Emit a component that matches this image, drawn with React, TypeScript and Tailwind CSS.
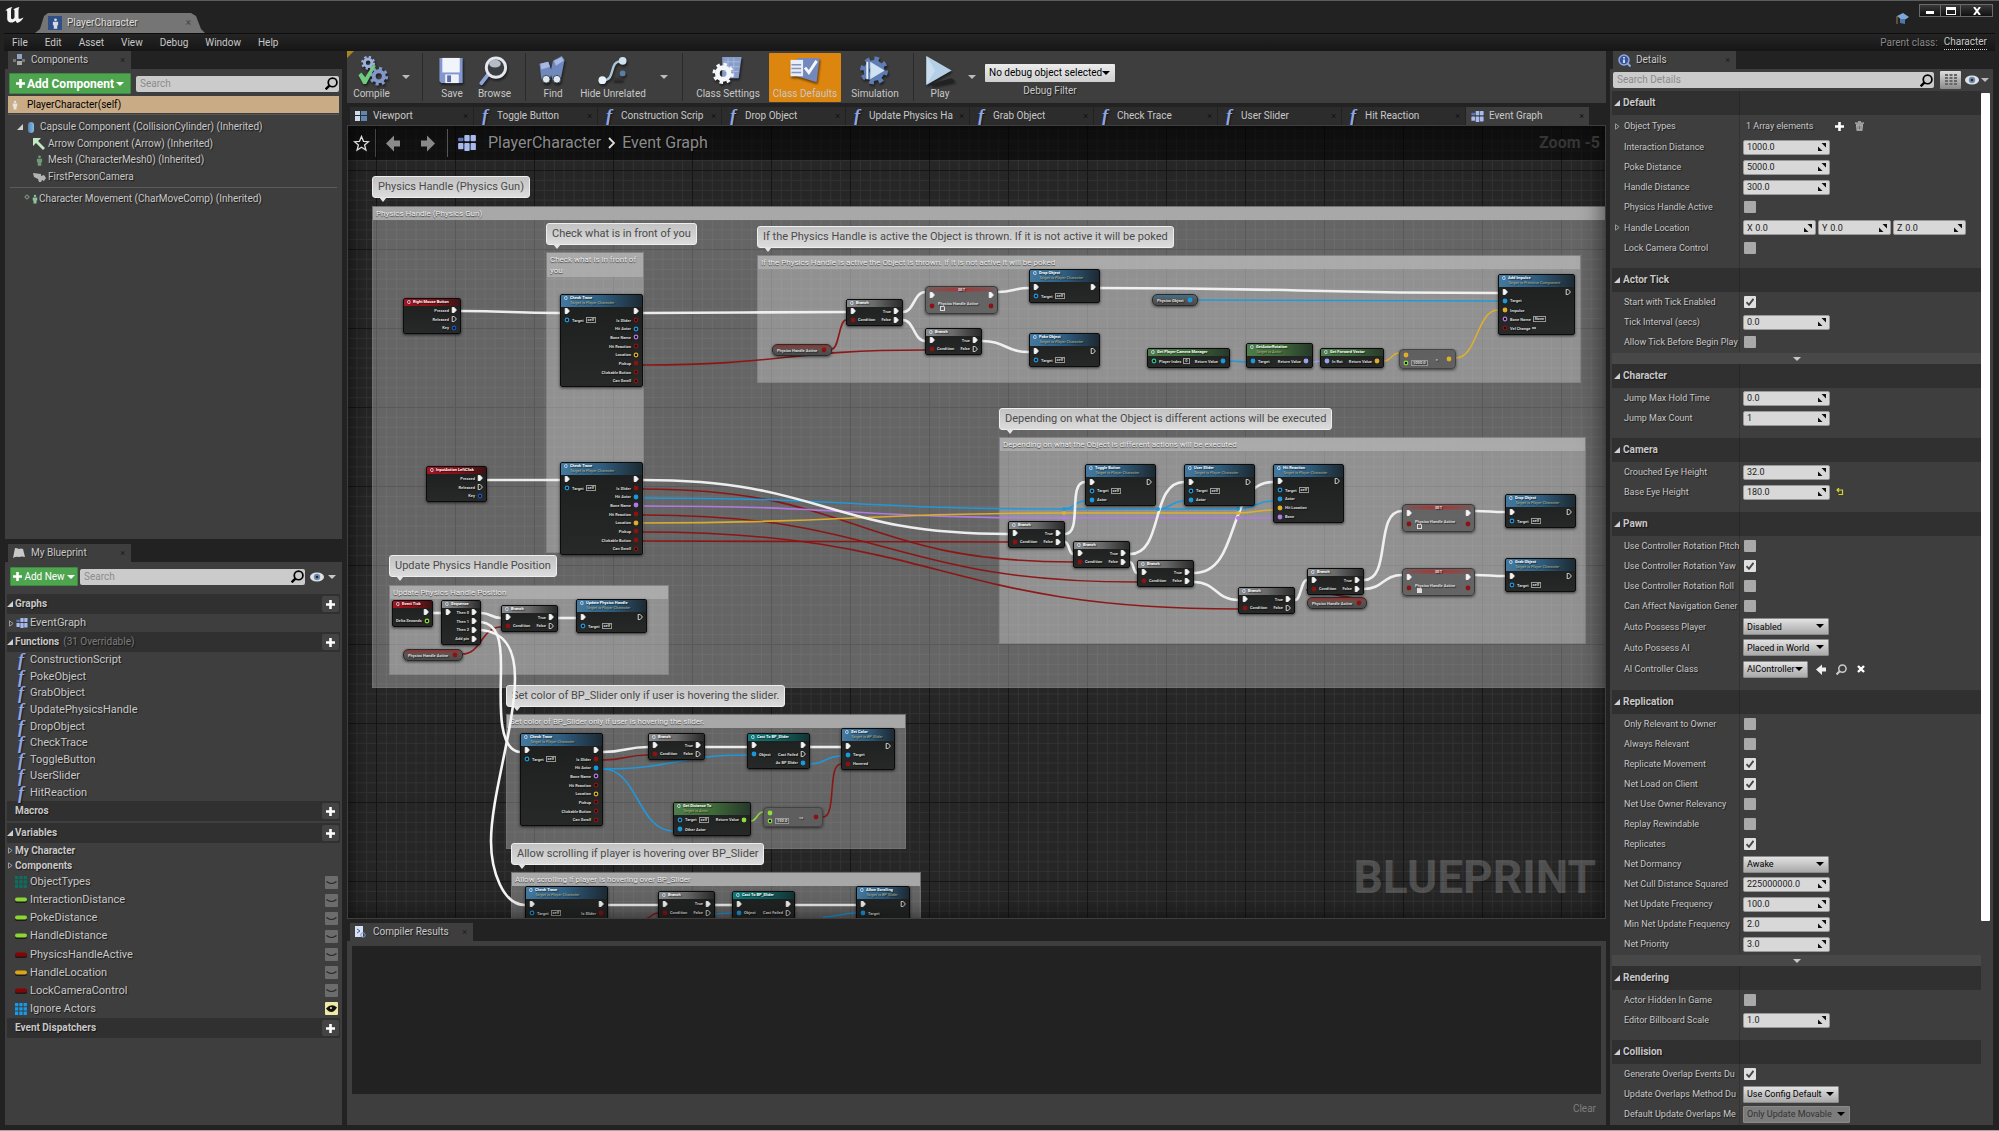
import type { ReactNode } from "react";
import clsx from "clsx";

type Tone =
  | "exec"
  | "blue"
  | "navy"
  | "red"
  | "purple"
  | "yellow"
  | "green"
  | "teal"
  | "lavender";

const toneColor: Record<Tone, string> = {
  exec: "#f4f4f4",
  blue: "#1c9ae0",
  navy: "#1657c4",
  red: "#8d1212",
  purple: "#b47be8",
  yellow: "#e3b02a",
  green: "#8ee03a",
  teal: "#2bc78c",
  lavender: "#9aa6f0",
};

type PinData = { tone: Tone; text?: string; linked?: boolean; box?: string };

type Row = [PinData | null, PinData | null];

type Skin = "func" | "event" | "flow" | "pure" | "cast";

type NodeData = {
  x: number;
  y: number;
  w: number;
  h: number;
  skin: Skin;
  title: string;
  sub?: string;
  rows: Row[];
};

const pin = (
  tone: Tone,
  text?: string,
  linked = false,
  box?: string,
): PinData => ({ tone, text, linked, box });

const execOn = pin("exec", undefined, true);
const execOff = pin("exec");
const selfPin = pin("blue", "Target", false, "self");

/* ---------- node builders ---------- */

const PLAYER = "Target is Player Character";

function checkTrace(x: number, y: number, linked: string[]): NodeData {
  const outs: [Tone, string][] = [
    ["red", "Is Slider"],
    ["blue", "Hit Actor"],
    ["purple", "Bone Name"],
    ["red", "Hit Reaction"],
    ["yellow", "Location"],
    ["red", "Pickup"],
    ["red", "Clickable Button"],
    ["red", "Can Scroll"],
  ];
  return {
    x,
    y,
    w: 83,
    h: 93,
    skin: "func",
    title: "Check Trace",
    sub: PLAYER,
    rows: [
      [execOn, execOn],
      ...outs.map(
        ([tone, text], i): Row => [
          i === 0 ? selfPin : null,
          pin(tone, text, linked.includes(text)),
        ],
      ),
    ],
  };
}

function branch(x: number, y: number, falseLinked = true): NodeData {
  return {
    x,
    y,
    w: 57,
    h: 27,
    skin: "flow",
    title: "Branch",
    rows: [
      [execOn, pin("exec", "True", true)],
      [pin("red", "Condition", true), pin("exec", "False", falseLinked)],
    ],
  };
}

function call(
  x: number,
  y: number,
  title: string,
  outLinked = false,
  extra: Row[] = [],
): NodeData {
  return {
    x,
    y,
    w: 71,
    h: extra.length === 0 ? 34 : extra.length === 1 ? 42 : 59,
    skin: "func",
    title,
    sub: PLAYER,
    rows: [[execOn, outLinked ? execOn : execOff], [selfPin, null], ...extra],
  };
}

function input(x: number, y: number, w: number, title: string): NodeData {
  return {
    x,
    y,
    w,
    h: 36,
    skin: "event",
    title,
    rows: [
      [null, pin("exec", "Pressed", true)],
      [null, pin("exec", "Released")],
      [null, pin("navy", "Key")],
    ],
  };
}

function castTo(x: number, y: number): NodeData {
  return {
    x,
    y,
    w: 63,
    h: 36,
    skin: "cast",
    title: "Cast To BP_Slider",
    rows: [
      [execOn, execOn],
      [pin("blue", "Object", true), pin("exec", "Cast Failed")],
      [null, pin("blue", "As BP Slider", true)],
    ],
  };
}

// nodes on the lower edge of the view only show their first rows
const firstRows = (node: NodeData, count: number, h: number): NodeData => ({
  ...node,
  h,
  rows: node.rows.slice(0, count),
});

const nodes: NodeData[] = [
  input(55, 172, 58, "Right Mouse Button"),
  input(78, 340, 61, "InputAction LeftClick"),
  checkTrace(212, 168, ["Pickup"]),
  checkTrace(212, 336, [
    "Is Slider",
    "Hit Actor",
    "Bone Name",
    "Hit Reaction",
    "Location",
    "Pickup",
    "Clickable Button",
  ]),
  branch(498, 173),
  branch(577, 202, false),
  call(681, 143, "Drop Object", true),
  call(681, 207, "Poke Object"),
  {
    x: 799,
    y: 222,
    w: 83,
    h: 20,
    skin: "pure",
    title: "Get Player Camera Manager",
    rows: [
      [
        pin("teal", "Player Index", false, "0"),
        pin("blue", "Return Value", true),
      ],
    ],
  },
  {
    x: 898,
    y: 217,
    w: 67,
    h: 25,
    skin: "pure",
    title: "GetActorRotation",
    sub: "Target is Actor",
    rows: [[pin("blue", "Target", true), pin("lavender", "Return Value", true)]],
  },
  {
    x: 972,
    y: 222,
    w: 64,
    h: 20,
    skin: "pure",
    title: "Get Forward Vector",
    rows: [
      [pin("lavender", "In Rot", true), pin("yellow", "Return Value", true)],
    ],
  },
  {
    x: 1150,
    y: 148,
    w: 77,
    h: 61,
    skin: "func",
    title: "Add Impulse",
    sub: "Target is Primitive Component",
    rows: [
      [execOn, execOff],
      [pin("blue", "Target", true), null],
      [pin("yellow", "Impulse", true), null],
      [pin("purple", "Bone Name", false, "None"), null],
      [pin("red", "Vel Change", false, " "), null],
    ],
  },
  call(737, 338, "Toggle Button", false, [[pin("blue", "Actor", true), null]]),
  call(836, 338, "User Slider", false, [[pin("blue", "Actor", true), null]]),
  call(925, 338, "Hit Reaction", false, [
    [pin("blue", "Actor", true), null],
    [pin("yellow", "Hit Location", true), null],
    [pin("purple", "Bone", true), null],
  ]),
  branch(660, 395),
  branch(725, 415),
  branch(789, 434),
  branch(890, 461, false),
  branch(959, 442),
  call(1157, 368, "Drop Object"),
  call(1157, 432, "Grab Object"),
  {
    x: 44,
    y: 474,
    w: 41,
    h: 27,
    skin: "event",
    title: "Event Tick",
    rows: [
      [null, execOn],
      [null, pin("green", "Delta Seconds")],
    ],
  },
  {
    x: 93,
    y: 474,
    w: 40,
    h: 45,
    skin: "flow",
    title: "Sequence",
    rows: [
      [execOn, pin("exec", "Then 0", true)],
      [null, pin("exec", "Then 1", true)],
      [null, pin("exec", "Then 2", true)],
      [null, pin("exec", "Add pin", true)],
    ],
  },
  branch(153, 479, false),
  call(228, 473, "Update Physics Handle"),
  checkTrace(172, 607, ["Is Slider", "Hit Actor"]),
  branch(300, 607, false),
  castTo(399, 607),
  {
    x: 493,
    y: 602,
    w: 54,
    h: 42,
    skin: "func",
    title: "Set Color",
    sub: "Target is BP Slider",
    rows: [
      [execOn, execOff],
      [pin("blue", "Target", true), null],
      [pin("red", "Hovered", true), null],
    ],
  },
  {
    x: 325,
    y: 676,
    w: 78,
    h: 34,
    skin: "pure",
    title: "Get Distance To",
    sub: "Target is Actor",
    rows: [
      [
        pin("blue", "Target", false, "self"),
        pin("green", "Return Value", true),
      ],
      [pin("blue", "Other Actor", true), null],
    ],
  },
  firstRows(checkTrace(177, 760, ["Is Slider"]), 2, 34),
  firstRows(branch(310, 765, false), 2, 28),
  firstRows(castTo(384, 765), 2, 28),
  {
    x: 508,
    y: 760,
    w: 54,
    h: 34,
    skin: "func",
    title: "Allow Scrolling",
    sub: "Target is BP Slider",
    rows: [
      [execOn, execOff],
      [pin("blue", "Target", true), null],
    ],
  },
];

const pills = [
  { x: 424, y: 218, w: 60, text: "Physics Handle Active", tone: "red" as Tone },
  { x: 804, y: 168, w: 46, text: "Physics Object", tone: "blue" as Tone },
  { x: 959, y: 471, w: 60, text: "Physics Handle Active", tone: "red" as Tone },
  { x: 55, y: 523, w: 60, text: "Physics Handle Active", tone: "red" as Tone },
];

const setNodes = [
  { x: 577, y: 160, on: false },
  { x: 1054, y: 378, on: false },
  { x: 1054, y: 442, on: true },
];

const mathNodes = [
  { x: 1051, y: 223, w: 57, value: "1000.0", op: "×", from: "yellow" as Tone, to: "yellow" as Tone },
  { x: 415, y: 681, w: 60, value: "150.0", op: "<=", from: "green" as Tone, to: "red" as Tone },
];

const comments = [
  { x: 24, y: 80, w: 1300, h: 482, text: "Physics Handle (Physics Gun)", bubble: 50 },
  { x: 198, y: 126, w: 98, h: 301, text: "Check what is in front of you", bubble: 97 },
  {
    x: 409,
    y: 129,
    w: 824,
    h: 128,
    text: "If the Physics Handle is active the Object is thrown. If it is not active it will be poked",
    bubble: 100,
  },
  {
    x: 651,
    y: 311,
    w: 587,
    h: 207,
    text: "Depending on what the Object is different actions will be executed",
    bubble: 282,
  },
  { x: 41, y: 459, w: 280, h: 90, text: "Update Physics Handle Position", bubble: 429 },
  {
    x: 158,
    y: 588,
    w: 400,
    h: 135,
    text: "Set color of BP_Slider only if user is hovering the slider.",
    bubble: 559,
  },
  {
    x: 163,
    y: 746,
    w: 410,
    h: 120,
    text: "Allow scrolling if player is hovering over BP_Slider",
    bubble: 717,
  },
];

// tone, x1, y1, x2, y2 and an optional reach for the bend
type WireData = [Tone, number, number, number, number, number?];

const wires: WireData[] = [
  ["red", 484, 223, 498, 194],
  ["red", 295, 239, 577, 224],
  ["red", 295, 363, 725, 436],
  ["red", 295, 389, 789, 456],
  ["red", 295, 406, 890, 483],
  ["red", 295, 415, 660, 416],
  ["red", 1016, 474, 959, 464, 6],
  ["red", 114, 528, 153, 501],
  ["red", 255, 634, 300, 629],
  ["red", 475, 691, 493, 638, 14],
  ["red", 296, 793, 310, 787],
  ["blue", 295, 372, 716, 383],
  ["blue", 716, 383, 890, 383],
  ["blue", 716, 383, 737, 375],
  ["blue", 810, 383, 836, 375],
  ["blue", 890, 383, 925, 375],
  ["blue", 850, 174, 1150, 175],
  ["blue", 882, 235, 898, 236],
  ["blue", 255, 643, 399, 629],
  ["blue", 255, 643, 325, 705],
  ["blue", 462, 638, 493, 630],
  ["blue", 330, 792, 384, 787],
  ["blue", 475, 791, 508, 787],
  ["purple", 295, 380, 716, 392],
  ["purple", 716, 392, 925, 392],
  ["yellow", 295, 397, 716, 387],
  ["yellow", 716, 387, 890, 387],
  ["yellow", 890, 387, 925, 384],
  ["yellow", 1036, 235, 1051, 227],
  ["yellow", 1108, 232, 1150, 184],
  ["lavender", 965, 236, 972, 235],
  ["green", 403, 695, 415, 686],
  ["exec", 113, 185, 212, 187],
  ["exec", 295, 187, 498, 186],
  ["exec", 555, 186, 577, 166],
  ["exec", 555, 194, 577, 215],
  ["exec", 650, 166, 681, 162],
  ["exec", 634, 215, 681, 226],
  ["exec", 752, 162, 1150, 167],
  ["exec", 139, 354, 212, 354],
  ["exec", 295, 354, 660, 408],
  ["exec", 717, 408, 737, 356, 18],
  ["exec", 717, 416, 725, 428],
  ["exec", 782, 428, 836, 356, 34],
  ["exec", 782, 436, 789, 447],
  ["exec", 846, 447, 925, 356, 48],
  ["exec", 846, 456, 890, 474],
  ["exec", 947, 474, 959, 454],
  ["exec", 1016, 454, 1054, 385, 28],
  ["exec", 1016, 463, 1054, 449],
  ["exec", 1127, 385, 1157, 386],
  ["exec", 1127, 449, 1157, 450],
  ["exec", 85, 487, 93, 487],
  ["exec", 133, 487, 153, 492],
  ["exec", 210, 492, 228, 492],
  ["exec", 255, 626, 300, 621],
  ["exec", 357, 621, 399, 621],
  ["exec", 462, 621, 493, 621],
  ["exec", 260, 779, 310, 779],
  ["exec", 367, 779, 384, 779],
  ["exec", 447, 779, 508, 779],
];

function wirePath([, x1, y1, x2, y2, reach]: WireData) {
  const bend = reach ?? Math.abs(x2 - x1) / 2;
  return `M${x1} ${y1}C${x1 + bend} ${y1} ${x2 - bend} ${y2} ${x2} ${y2}`;
}

/* ---------- graph ---------- */

function Pin({ data, right }: { data: PinData | null; right?: boolean }) {
  if (!data) return <span />;
  const color = toneColor[data.tone];
  return (
    <span
      className={clsx(
        "flex items-center gap-[2px] whitespace-nowrap",
        right && "flex-row-reverse",
      )}
    >
      <svg className="size-[6px] shrink-0" viewBox="0 0 10 10">
        {data.tone === "exec" ? (
          <path
            d="M2 0.5h3l4 4.5l-4 4.5h-3z"
            fill={data.linked ? color : "none"}
            stroke={color}
            strokeWidth="1.4"
          />
        ) : (
          <circle
            cx="5"
            cy="5"
            r="3"
            fill={data.linked ? color : "#111"}
            stroke={color}
            strokeWidth="2"
          />
        )}
      </svg>
      {data.text && <span>{data.text}</span>}
      {data.box && (
        <span className="min-w-[4px] border border-[#999] px-px leading-[4px]">
          {data.box}
        </span>
      )}
    </span>
  );
}

const skinHeader: Record<Skin, string> = {
  func: "bg-linear-to-r from-[#44799f] via-[#2f5d80] to-[#1c2a33]",
  event: "bg-linear-to-r from-[#a01420] via-[#8a1119] to-[#3a1214]",
  flow: "bg-linear-to-r from-[#8a8a8a] via-[#6a6a6a] to-[#2a2a2a]",
  pure: "bg-linear-to-r from-[#4f7d4a] via-[#3f6b3a] to-[#27382a]",
  cast: "bg-linear-to-r from-[#117a78] via-[#0e6261] to-[#123433]",
};

function GraphNode({ node }: { node: NodeData }) {
  return (
    <div
      className="absolute flex flex-col overflow-hidden rounded-[2px] border border-[#0c0c0c] bg-linear-to-b from-[#1c1f1d] to-[#262927] text-[4px] leading-[5px] font-bold text-[#d8d8d8] shadow-[0_1px_3px_#000a]"
      style={{ left: node.x, top: node.y, width: node.w, height: node.h }}
    >
      <div
        className={clsx(
          "shrink-0 pl-[3px]",
          skinHeader[node.skin],
          node.sub ? "h-[12px]" : "h-[7px]",
        )}
      >
        <div className="flex items-center gap-[2px] whitespace-nowrap">
          <svg className="size-[4px] shrink-0" viewBox="0 0 10 10">
            <path
              d="M8 1h-5l-2 4l2 4h5M5 5h5"
              fill="none"
              stroke="#cfe4ff"
              strokeWidth="2"
            />
          </svg>
          <span className="text-white">{node.title}</span>
        </div>
        {node.sub && (
          <div className="pl-[6px] font-normal whitespace-nowrap text-[#b5b384] italic">
            {node.sub}
          </div>
        )}
      </div>
      <div className="flex flex-1 flex-col px-[3px] pb-px">
        {node.rows.map(([left, right], i) => (
          <div key={i} className="flex flex-1 items-center justify-between">
            <Pin data={left} />
            <Pin data={right} right />
          </div>
        ))}
      </div>
    </div>
  );
}

function PillNode({ pill }: { pill: (typeof pills)[number] }) {
  return (
    <div
      className={clsx(
        "absolute flex h-[12px] items-center justify-between rounded-[5px] border border-[#2a2a2a] bg-linear-to-b px-[4px] text-[4px] leading-[5px] font-bold text-[#ddd] shadow-[0_1px_3px_#0009]",
        pill.tone === "red"
          ? "from-[#8a3030] via-[#555] to-[#4a4a4a]"
          : "from-[#3c718c] via-[#555] to-[#4a4a4a]",
      )}
      style={{ left: pill.x, top: pill.y, width: pill.w }}
    >
      <span className="whitespace-nowrap">{pill.text}</span>
      <Pin data={pin(pill.tone, undefined, true)} />
    </div>
  );
}

function SetNode({ node }: { node: (typeof setNodes)[number] }) {
  return (
    <div
      className="absolute flex h-[28px] w-[73px] flex-col rounded-[4px] border border-[#3a3a3a] bg-[#626262]/95 px-[3px] text-[4px] leading-[5px] font-bold text-[#ddd] shadow-[0_1px_3px_#0009]"
      style={{ left: node.x, top: node.y }}
    >
      <div className="bg-radial from-[#a33] to-transparent text-center">SET</div>
      <div className="flex justify-between">
        <Pin data={execOn} />
        <Pin data={execOn} right />
      </div>
      <div className="flex flex-1 items-center justify-between">
        <div className="flex items-center gap-[3px]">
          <Pin data={pin("red", undefined, true)} />
          <div>
            <div className="whitespace-nowrap">Physics Handle Active</div>
            <div
              className={clsx(
                "ml-[2px] size-[5px] border border-[#ddd]",
                node.on && "bg-[#ddd]",
              )}
            />
          </div>
        </div>
        <Pin data={pin("red", undefined, true)} right />
      </div>
    </div>
  );
}

function MathNode({ node }: { node: (typeof mathNodes)[number] }) {
  return (
    <div
      className="absolute flex h-[20px] items-center justify-between rounded-[4px] border border-[#444] bg-[#5e5e5e]/95 px-[3px] text-[4px] leading-[5px] font-bold text-[#ddd] shadow-[0_1px_3px_#0009]"
      style={{ left: node.x, top: node.y, width: node.w }}
    >
      <div className="flex flex-col gap-[2px]">
        <Pin data={pin(node.from, undefined, true)} />
        <Pin data={pin("green", undefined, false, node.value)} />
      </div>
      <span>{node.op}</span>
      <Pin data={pin(node.to, undefined, true)} right />
    </div>
  );
}

function Graph() {
  return (
    <div className="absolute inset-0 overflow-hidden bg-[#262626]">
      <svg className="absolute inset-0 size-full">
        <defs>
          <pattern
            id="grid"
            x="28"
            y="44"
            width="79"
            height="79"
            patternUnits="userSpaceOnUse"
          >
            <path
              d="M10.4 0v79M20.3 0v79M30.1 0v79M40 0v79M49.9 0v79M59.8 0v79M69.6 0v79M0 10.4h79M0 20.3h79M0 30.1h79M0 40h79M0 49.9h79M0 59.8h79M0 69.6h79"
              stroke="#313131"
            />
            <path d="M0.5 0v79M0 0.5h79" stroke="#161616" />
          </pattern>
        </defs>
        <rect width="100%" height="100%" fill="url(#grid)" />
      </svg>

      {comments.map((comment) => (
        <div
          key={comment.text}
          className="absolute border border-[#7a7a7a]/60 bg-white/29"
          style={{
            left: comment.x,
            top: comment.y,
            width: comment.w,
            height: comment.h,
          }}
        >
          <div className="bg-[#acacac]/95 px-[3px] py-px text-[8px] leading-[11px] text-[#eee] [text-shadow:0_1px_1px_#333]">
            {comment.text}
          </div>
        </div>
      ))}

      {comments.map((comment) => (
        <div
          key={comment.text}
          className="absolute flex h-[22px] items-center rounded-[3px] border border-[#eee] bg-linear-to-b from-[#c2c2c2] to-[#dcdcdc] px-[5px] text-[11px] whitespace-nowrap text-[#4a4a4a] [text-shadow:none]"
          style={{ left: comment.x, top: comment.bubble }}
        >
          {comment.text}
          <span className="absolute top-full left-[6px] border-x-[4px] border-t-[5px] border-x-transparent border-t-[#e4e4e4]" />
        </div>
      ))}

      <svg className="absolute inset-0 size-full" fill="none">
        {wires.map((wire, i) => (
          <path
            key={i}
            d={wirePath(wire)}
            stroke={toneColor[wire[0]]}
            strokeWidth={wire[0] === "exec" ? 2.6 : 1.6}
            opacity="0.95"
          />
        ))}
        <path
          d="M133 496C150 498 153 515 153 540C153 570 148 624 172 626"
          stroke="#f4f4f4"
          strokeWidth="2.6"
        />
        <path
          d="M133 504C155 506 167 520 167 552C167 600 143 670 143 715C143 745 155 779 177 779"
          stroke="#f4f4f4"
          strokeWidth="2.6"
        />
        <g fill="#1c9ae0">
          <circle cx="716" cy="383" r="2" />
          <circle cx="810" cy="383" r="2" />
          <circle cx="890" cy="383" r="2" />
        </g>
        <g fill="#e3b02a">
          <circle cx="716" cy="387" r="2" />
          <circle cx="890" cy="387" r="2" />
        </g>
        <g fill="#b47be8">
          <circle cx="716" cy="392" r="2" />
          <circle cx="890" cy="392" r="2" />
        </g>
      </svg>

      {nodes.map((node, i) => (
        <GraphNode key={i} node={node} />
      ))}
      {pills.map((pill, i) => (
        <PillNode key={i} pill={pill} />
      ))}
      {setNodes.map((node, i) => (
        <SetNode key={i} node={node} />
      ))}
      {mathNodes.map((node, i) => (
        <MathNode key={i} node={node} />
      ))}

      <div className="pointer-events-none absolute inset-0 shadow-[inset_0_0_24px_#000a]" />
      <div className="pointer-events-none absolute right-[9px] bottom-[11px] text-[46px] leading-[60px] font-bold text-white/20 [text-shadow:none]">
        BLUEPRINT
      </div>
    </div>
  );
}

/* ---------- shared bits ---------- */

function FnIcon() {
  return (
    <span
      aria-hidden
      className="w-[12px] text-center font-['Liberation_Serif',serif] text-[18px] leading-[14px] font-bold text-[#8ea6e6] italic"
    >
      f
    </span>
  );
}

function GraphIcon({ className }: { className: string }) {
  return (
    <svg className={className} viewBox="0 0 20 18">
      <g fill="#a9bbee">
        <rect x="7" y="0" width="6" height="7" rx="1" />
        <rect x="14" y="0" width="6" height="7" rx="1" />
        <rect x="0" y="9" width="6" height="7" rx="1" />
        <rect x="7" y="9" width="6" height="9" rx="1" />
        <rect x="14" y="9" width="6" height="8" rx="1" />
      </g>
      <rect x="0" y="3" width="6" height="4" rx="1" fill="#5b74b8" />
    </svg>
  );
}

function Caret({ className }: { className?: string }) {
  return (
    <svg className={clsx("h-[4px] w-[8px] shrink-0", className)} viewBox="0 0 8 4">
      <path d="M0 0h8l-4 4z" fill="currentColor" />
    </svg>
  );
}

function OpenMark() {
  return (
    <svg className="size-[6px] shrink-0" viewBox="0 0 6 6">
      <path d="M6 0v6h-6z" fill="#d0d0d0" />
    </svg>
  );
}

function ClosedMark() {
  return (
    <svg className="h-[7px] w-[5px] shrink-0" viewBox="0 0 5 7">
      <path d="M0.5 0.8v5.4l3.6-2.7z" fill="none" stroke="#999" />
    </svg>
  );
}

function PlusMark({ className }: { className?: string }) {
  return (
    <svg className={clsx("size-[9px] shrink-0", className)} viewBox="0 0 9 9">
      <path d="M4.5 0v9M0 4.5h9" stroke="#fff" strokeWidth="2.6" />
    </svg>
  );
}

function Magnifier({ className }: { className: string }) {
  return (
    <svg className={className} viewBox="0 0 12 12" fill="none" stroke="currentColor">
      <circle cx="7" cy="5" r="4" strokeWidth="1.6" />
      <path d="M4 8l-3.4 3.4" strokeWidth="2.2" />
    </svg>
  );
}

function Eye() {
  return (
    <svg className="h-[10px] w-[14px] shrink-0" viewBox="0 0 14 10">
      <ellipse cx="7" cy="5" rx="7" ry="4.5" fill="#dfe3e8" />
      <circle cx="7" cy="5" r="3.2" fill="#6f8cae" />
      <circle cx="7" cy="5" r="1.3" fill="#1d2a3a" />
    </svg>
  );
}

function Person({ color, className }: { color: string; className: string }) {
  return (
    <svg className={className} viewBox="0 0 8 12" fill={color}>
      <circle cx="4" cy="1.8" r="1.6" />
      <path d="M1 4h6v4h-1v4h-4v-4h-1z" />
    </svg>
  );
}

function SearchBox({
  label,
  className,
}: {
  label: string;
  className?: string;
}) {
  return (
    <div
      className={clsx(
        "flex h-[16px] min-w-0 flex-1 items-center rounded-[2px] bg-[#cbcbcb] pr-[1px] pl-[4px]",
        className,
      )}
    >
      <input
        aria-label={label}
        className="min-w-0 flex-1 bg-transparent text-[10px] leading-[14px] text-[#222] outline-none [text-shadow:none] placeholder:text-[#8c8c8c]"
        placeholder={label}
        type="text"
      />
      <Magnifier className="size-[13px] text-black" />
    </div>
  );
}

function PanelTab({ icon, text }: { icon: ReactNode; text: string }) {
  return (
    <div className="flex h-[18px] w-[123px] items-center bg-[#3e3e3e] pr-[6px] pl-[5px]">
      <span className="flex w-[18px] items-center">{icon}</span>
      <span className="flex-1">{text}</span>
      <button aria-label={`Close ${text}`} className="text-[9px] text-[#1c1c1c]" type="button">
        ×
      </button>
    </div>
  );
}

/* ---------- title bar and menu ---------- */

function TitleBar() {
  return (
    <header className="flex h-[32px] shrink-0 items-start pr-[6px] pl-[5px]">
      <svg className="mt-[6px] h-[16px] w-[19px]" viewBox="0 0 19 16" fill="#f4f4f4">
        <path d="M0 4C2 1.500 4 0.500 7.500 0C6.500 1 6 2 6 3.500V10.500C6 12 7 12.500 8 12C9 11.500 9.500 11 9.500 10V4C9.500 3 9 2.600 8.200 2.800C10 1 11.500 0.500 14.500 0C13.800 1 13.500 2 13.500 3V10.500C13.500 12 14.500 12.500 18.500 10.500C17 13.500 15 15.200 12 16L10.500 13.800C9 15.200 7.500 15.800 5.500 15.500C3 15 2.200 13.500 2.200 11.500V5C2.200 3.500 1.500 3.300 0 4Z" />
      </svg>
      <div className="mt-[12px] ml-[11px] flex h-[20px] w-[170px] items-center bg-[#757575] pr-[14px] pl-[13px] text-[#ddd] [clip-path:polygon(0_100%,5px_80%,9px_15%,13px_0,156px_0,161px_15%,166px_80%,100%_100%)]">
        <span className="flex size-[14px] items-center justify-center bg-[#304f88]">
          <Person color="#d5dbe6" className="h-[11px] w-[7px]" />
        </span>
        <span className="ml-[5px] flex-1">PlayerCharacter</span>
        <button aria-label="Close PlayerCharacter" className="text-[10px] text-[#444]" type="button">
          ×
        </button>
      </div>
      <div className="flex-1" />
      <svg className="mt-[11px] mr-[10px] h-[13px] w-[14px]" viewBox="0 0 14 13">
        <path d="M2 4l6-3l6 4l-6 4z" fill="#7ea6d8" />
        <path d="M5 7v4l5 1v-5z" fill="#4d76ad" />
        <path d="M2 4v8" stroke="#a07840" />
      </svg>
      <div className="mt-[3px] flex h-[13px] border border-[#6a6a6a] bg-linear-to-b from-[#3a3a3a] to-[#111]">
        <button aria-label="Minimize" className="flex w-[21px] items-center justify-center border-r border-[#6a6a6a]" type="button">
          <span className="mt-[3px] h-[3px] w-[8px] bg-white" />
        </button>
        <button aria-label="Maximize" className="flex w-[20px] items-center justify-center border-r border-[#6a6a6a]" type="button">
          <span className="h-[8px] w-[10px] border border-t-[3px] border-white" />
        </button>
        <button aria-label="Close" className="flex w-[31px] items-center justify-center" type="button">
          <svg className="size-[8px]" viewBox="0 0 8 8">
            <path d="M1 0l6 8M7 0l-6 8" stroke="#fff" strokeWidth="2" />
          </svg>
        </button>
      </div>
    </header>
  );
}

function MenuBar() {
  return (
    <nav className="mr-[4px] ml-[4px] flex h-[18px] shrink-0 items-center gap-[17px] border-t border-[#0d0d0d] bg-linear-to-b from-[#242424] to-[#161616] pr-[8px] pl-[8px]">
      {["File", "Edit", "Asset", "View", "Debug", "Window", "Help"].map((item) => (
        <button key={item} type="button">
          {item}
        </button>
      ))}
      <div className="flex flex-1 justify-end gap-[6px]">
        <span className="text-[#888]">Parent class:</span>
        <a className="border-b border-dotted border-[#ccc] leading-[11px]" href="#character">
          Character
        </a>
      </div>
    </nav>
  );
}

/* ---------- left column ---------- */

function ComponentsPanel() {
  return (
    <section className="flex h-[488px] shrink-0 flex-col">
      <div className="pl-[3px]">
        <PanelTab
          text="Components"
          icon={
            <svg className="size-[12px]" viewBox="0 0 12 12">
              <rect x="4" y="0" width="5" height="5" fill="#8fa4c0" />
              <rect x="0" y="5" width="3" height="3" fill="#777" />
              <rect x="9" y="5" width="3" height="3" fill="#777" />
              <rect x="4" y="7" width="5" height="4" fill="#aaa" />
            </svg>
          }
        />
      </div>
      <div className="flex-1 bg-[#3e3e3e] pt-[4px] pr-[3px] pl-[3px]">
        <div className="flex h-[21px] items-center gap-[5px] pl-px">
          <button
            className="flex h-[21px] w-[122px] items-center justify-center gap-[2px] rounded-[1px] border border-[#3c8a3f] bg-[#4fa44f] text-[12px] font-bold text-white"
            type="button"
          >
            <PlusMark />
            <span>Add Component</span>
            <Caret />
          </button>
          <SearchBox label="Search" />
        </div>
        <div className="mt-[2px] flex h-[17px] items-center bg-[#c9ab86] pl-[4px] text-[10px] text-black [text-shadow:none]">
          <Person color="#e8e4de" className="h-[12px] w-[6px]" />
          <span className="ml-[9px]">PlayerCharacter(self)</span>
        </div>
        <div className="mt-[1px] border-t border-[#555]" />
        <div className="mt-[4px] flex h-[66px] flex-col">
          <div className="flex flex-1 items-center gap-[5px] pl-[9px]">
            <OpenMark />
            <span className="h-[11px] w-[6px] rounded-full bg-linear-to-r from-[#4f86b8] to-[#8bbbe0]" />
            <span className="pl-px">Capsule Component (CollisionCylinder) (Inherited)</span>
          </div>
          <div className="flex flex-1 items-center gap-[3px] pl-[25px]">
            <svg className="size-[12px]" viewBox="0 0 12 12">
              <path d="M0 0h8l-3 3l7 7l-2 2l-7-7l-3 3z" fill="#c4e8c6" />
            </svg>
            <span>Arrow Component (Arrow) (Inherited)</span>
          </div>
          <div className="flex flex-1 items-center gap-[5px] pl-[28px]">
            <Person color="#6f9a78" className="h-[11px] w-[7px]" />
            <span>Mesh (CharacterMesh0) (Inherited)</span>
          </div>
          <div className="flex flex-1 items-center gap-[2px] pl-[25px]">
            <svg className="h-[10px] w-[13px]" viewBox="0 0 13 10">
              <path d="M0 1l8 1v2l3-1l2 3l-2 3l-2-1l-1 2h-2l-1-3l-4-2z" fill="#b4b4b4" />
            </svg>
            <span>FirstPersonCamera</span>
          </div>
        </div>
        <div className="mx-[2px] mt-[2px] border-t border-[#5a5a5a]" />
        <div className="mt-[3px] flex h-[16px] items-center pl-[17px]">
          <span className="-mt-[5px] size-[4px] rotate-45 border border-[#7a9c80]" />
          <Person color="#8fc49a" className="ml-[3px] h-[12px] w-[6px]" />
          <span className="pl-px">Character Movement (CharMoveComp) (Inherited)</span>
        </div>
      </div>
    </section>
  );
}

function GroupHeader({
  text,
  note,
  open,
}: {
  text: string;
  note?: string;
  open?: boolean;
}) {
  return (
    <div className="flex h-[20px] items-center bg-[#303030] pr-px">
      <span className="flex w-[8px]">{open && <OpenMark />}</span>
      <span className="font-bold">{text}</span>
      {note && <span className="pl-[4px] text-[#7c7c7c]">{note}</span>}
      <span className="flex-1" />
      <button
        aria-label={`Add to ${text}`}
        className="flex h-[16px] w-[17px] items-center justify-center rounded-[2px] bg-[#444]"
        type="button"
      >
        <PlusMark />
      </button>
    </div>
  );
}

const functionNames = [
  "ConstructionScript",
  "PokeObject",
  "GrabObject",
  "UpdatePhysicsHandle",
  "DropObject",
  "CheckTrace",
  "ToggleButton",
  "UserSlider",
  "HitReaction",
];

const variables = [
  { name: "ObjectTypes", color: "#0b6e60", array: true },
  { name: "InteractionDistance", color: "#8ad632" },
  { name: "PokeDistance", color: "#8ad632" },
  { name: "HandleDistance", color: "#8ad632" },
  { name: "PhysicsHandleActive", color: "#850505" },
  { name: "HandleLocation", color: "#dba31a" },
  { name: "LockCameraControl", color: "#850505" },
  { name: "Ignore Actors", color: "#149bea", array: true, open: true },
];

function VariableRow({ variable }: { variable: (typeof variables)[number] }) {
  return (
    <div className="flex flex-1 items-center pr-[2px] pl-[8px] text-[11px]">
      <svg className="h-[12px] w-[12px]" viewBox="0 0 12 12">
        {variable.array ? (
          <path
            d="M0 0h3.300v3.300h-3.300zM4.300 0h3.300v3.300h-3.300zM8.600 0h3.300v3.300h-3.300zM0 4.300h3.300v3.300h-3.300zM4.300 4.300h3.300v3.300h-3.300zM8.600 4.300h3.300v3.300h-3.300zM0 8.600h3.300v3.300h-3.300zM4.300 8.600h3.300v3.300h-3.300zM8.600 8.600h3.300v3.300h-3.300z"
            fill={variable.color}
          />
        ) : (
          <>
            <rect y="5" width="12" height="4" rx="2" fill="#1a1a1a" />
            <rect y="3.500" width="12" height="4" rx="2" fill={variable.color} />
          </>
        )}
      </svg>
      <span className="flex-1 pl-[3px]">{variable.name}</span>
      <button
        aria-label={`Toggle ${variable.name}`}
        className={clsx(
          "flex size-[13px] items-center justify-center rounded-[1px]",
          variable.open ? "bg-[#eee9a4]" : "bg-[#6c6c6c]",
        )}
        type="button"
      >
        <svg className="h-[9px] w-[11px]" viewBox="0 0 11 9">
          {variable.open ? (
            <>
              <path d="M0 4.500Q5.500-1.500 11 3.500Q8 8 5.500 8Q2.500 8 0 4.500z" fill="#111" />
              <circle cx="5" cy="4" r="1" fill="#eee9a4" />
            </>
          ) : (
            <path d="M0.500 3.500Q5.500 7.500 10.500 3.500" fill="none" stroke="#222" strokeWidth="1.2" />
          )}
        </svg>
      </button>
    </div>
  );
}

function BlueprintPanel() {
  return (
    <section className="flex min-h-0 flex-1 flex-col pt-[5px]">
      <div className="pl-[3px]">
        <PanelTab
          text="My Blueprint"
          icon={
            <svg className="h-[10px] w-[12px]" viewBox="0 0 12 10">
              <path d="M2 0q2 0 4 1q2-1 4 0l2 8q-3-1-6 0q-3-1-6 1z" fill="#c9c9c9" />
            </svg>
          }
        />
      </div>
      <div className="min-h-0 flex-1 bg-[#3e3e3e] px-[2px] pt-[5px]">
        <div className="flex h-[19px] items-center gap-[2px] pl-[3px]">
          <button
            className="flex h-[19px] w-[68px] items-center justify-center gap-[2px] rounded-[1px] border border-[#3c8a3f] bg-[#4fa44f] text-[10px] leading-[12px] whitespace-nowrap text-white"
            type="button"
          >
            <PlusMark />
            <span>Add New</span>
            <Caret />
          </button>
          <SearchBox label="Search" />
          <button aria-label="View options" className="flex w-[33px] items-center gap-[4px] pl-[3px]" type="button">
            <Eye />
            <Caret />
          </button>
        </div>
        <div className="mt-[8px]">
          <GroupHeader open text="Graphs" />
        </div>
        <div className="flex h-[18px] items-center pl-[2px] text-[11px]">
          <ClosedMark />
          <GraphIcon className="ml-px h-[10px] w-[14px]" />
          <span className="pl-px">EventGraph</span>
        </div>
        <GroupHeader open note="(31 Overridable)" text="Functions" />
        <div className="flex h-[149px] flex-col">
          {functionNames.map((name) => (
            <div key={name} className="flex flex-1 items-center gap-[3px] pl-[8px] text-[11px]">
              <FnIcon />
              <span>{name}</span>
            </div>
          ))}
        </div>
        <GroupHeader text="Macros" />
        <div className="mt-[2px]">
          <GroupHeader open text="Variables" />
        </div>
        {["My Character", "Components"].map((name) => (
          <div key={name} className="flex h-[15px] items-center gap-[2px] pl-px font-bold">
            <ClosedMark />
            <span>{name}</span>
          </div>
        ))}
        <div className="flex h-[145px] flex-col">
          {variables.map((variable) => (
            <VariableRow key={variable.name} variable={variable} />
          ))}
        </div>
        <GroupHeader text="Event Dispatchers" />
      </div>
    </section>
  );
}

/* ---------- toolbar ---------- */

function Gear({ cx, cy, r, color }: { cx: number; cy: number; r: number; color: string }) {
  return (
    <g fill="none" stroke={color}>
      <circle cx={cx} cy={cy} r={r * 0.65} strokeWidth={r * 0.5} />
      <circle
        cx={cx}
        cy={cy}
        r={r}
        strokeWidth={r * 0.4}
        strokeDasharray={`${r * 0.39} ${r * 0.395}`}
      />
    </g>
  );
}

const toolIcons: Record<string, ReactNode> = {
  Compile: (
    <>
      <Gear cx={12} cy={7} r={6} color="#9db1dd" />
      <Gear cx={23} cy={21} r={8} color="#8297c8" />
      <path d="M2 20l3-3l4 5l8-13l3 1l-10 19h-3z" fill="#6fcb7d" />
    </>
  ),
  Save: (
    <>
      <path d="M3 2h24v26h-22l-2-2z" fill="#8297cf" />
      <rect x="6" y="2" width="18" height="15" fill="#f1f4fa" />
      <rect x="9" y="19" width="14" height="9" fill="#eef1f8" />
      <rect x="11" y="20" width="4" height="7" fill="#5c6ea8" />
    </>
  ),
  Browse: (
    <>
      <path d="M9 19l-7 9" stroke="#8ea3da" strokeWidth="4" strokeLinecap="round" />
      <circle cx="17" cy="12" r="10" fill="#3a3d42" stroke="#e4e8ee" strokeWidth="3" />
      <ellipse cx="16" cy="8" rx="6" ry="4" fill="#b5bcc6" />
    </>
  ),
  Find: (
    <>
      <path d="M2 8l9-2l3 8l2-9l9-5l3 4l-4 20l-8 2l-2-6l-2 6l-8-2z" fill="#7088bd" />
      <path d="M3 8l8-2l2 5l-9 3zM17 5l8-4l2 4l-8 5z" fill="#a7b9e2" />
      <circle cx="9" cy="24" r="4" fill="#dfe6f2" stroke="#344" />
      <circle cx="20" cy="24" r="4" fill="#dfe6f2" stroke="#344" />
    </>
  ),
  "Hide Unrelated": (
    <>
      <path d="M6 25c14 0 4-20 20-20" fill="none" stroke="#a9c7da" strokeWidth="2.5" />
      <path d="M16 24h10" stroke="#333" strokeWidth="3" />
      <circle cx="5" cy="25" r="4" fill="#e8f2f8" />
      <circle cx="26" cy="5" r="4" fill="#cfe2ee" />
      <circle cx="26" cy="18" r="3" fill="#5a7da6" />
    </>
  ),
  "Class Settings": (
    <>
      <path d="M10 1h20l-3 22h-17z" fill="#879cc9" />
      <path d="M12 6h16M12 11h16M12 16h15M16 2v20M22 2v20" stroke="#a9badd" />
      <circle cx="11" cy="18" r="6" fill="none" stroke="#f4f6fa" strokeWidth="5" />
      <circle cx="11" cy="18" r="9.500" fill="none" stroke="#f4f6fa" strokeWidth="3" strokeDasharray="3.700 3.760" />
    </>
  ),
  "Class Defaults": (
    <>
      <path d="M8 2h23l-3 25l-20-6z" fill="#7388bd" />
      <path d="M1 4h13v17h-13z" fill="#e9edf6" />
      <path d="M2 9h10M2 13h10M2 17h10" stroke="#8494bf" strokeWidth="1.500" />
      <path d="M16 12l4 5l8-12" fill="none" stroke="#f4f7fc" strokeWidth="3" />
    </>
  ),
  Simulation: (
    <>
      <Gear cx={15} cy={15} r={12} color="#5f7db4" />
      <path d="M11 6v18l15-9z" fill="#cfe2f0" />
      <path d="M8 6v18" stroke="#e4eef6" strokeWidth="2" />
    </>
  ),
  Play: (
    <>
      <path d="M6 29l22-6l4 3l-24 5z" fill="#222" />
      <path d="M2 0v30l26-15z" fill="#b4cfe6" />
      <path d="M2 0v30l9-15z" fill="#c9ddee" />
    </>
  ),
};

function ToolButton({ name, className }: { name: string; className: string }) {
  return (
    <button
      className={clsx("flex h-[49px] flex-col items-center pt-[3px] whitespace-nowrap", className)}
      type="button"
    >
      <svg className="h-[30px] w-[32px] drop-shadow-[1px_2px_1px_#0008]" viewBox="0 0 32 31">
        {toolIcons[name]}
      </svg>
      <span className="mt-[2px] text-[10px] leading-[12px]">{name}</span>
    </button>
  );
}

function ToolMenu({ label, className }: { label: string; className: string }) {
  return (
    <button aria-label={label} className={clsx("flex h-[49px] items-center justify-center", className)} type="button">
      <Caret className="text-[#bbb]" />
    </button>
  );
}

function Divider() {
  return <span className="h-[48px] w-px bg-[#2a2a2a]" />;
}

function Toolbar() {
  return (
    <div className="flex h-[52px] shrink-0 items-center bg-[#3e3e3e]">
      <span className="self-start border-t-[7px] border-r-[7px] border-t-[#a8861d] border-r-transparent" />
      <ToolButton className="w-[35px]" name="Compile" />
      <ToolMenu className="w-[33px]" label="Compile options" />
      <Divider />
      <ToolButton className="ml-[8px] w-[42px]" name="Save" />
      <ToolButton className="w-[43px]" name="Browse" />
      <span className="w-[9px]" />
      <Divider />
      <ToolButton className="ml-[8px] w-[38px]" name="Find" />
      <ToolButton className="w-[82px]" name="Hide Unrelated" />
      <ToolMenu className="w-[20px]" label="Hide options" />
      <span className="w-[8px]" />
      <Divider />
      <ToolButton className="ml-[6px] w-[78px]" name="Class Settings" />
      <ToolButton className="ml-[2px] w-[72px] rounded-[1px] bg-[#dc850f]" name="Class Defaults" />
      <ToolButton className="w-[68px]" name="Simulation" />
      <span className="w-[4px]" />
      <Divider />
      <ToolButton className="ml-[6px] w-[40px]" name="Play" />
      <ToolMenu className="w-[23px]" label="Play options" />
      <div className="ml-[2px] flex flex-col items-center gap-[2px] pt-[8px]">
        <div className="relative h-[18px] w-[130px]">
          <select
            aria-label="Debug Filter"
            className="size-full appearance-none rounded-[1px] bg-linear-to-b from-[#ececec] to-[#cfcfcf] pl-[4px] text-[10px] text-black [text-shadow:none]"
          >
            <option>No debug object selected</option>
          </select>
          <Caret className="pointer-events-none absolute top-[7px] right-[5px] text-black" />
        </div>
        <span>Debug Filter</span>
      </div>
    </div>
  );
}

const graphTabs = [
  "Viewport",
  "Toggle Button",
  "Construction Scrip",
  "Drop Object",
  "Update Physics Ha",
  "Grab Object",
  "Check Trace",
  "User Slider",
  "Hit Reaction",
  "Event Graph",
];

function GraphTabs() {
  return (
    <div className="flex h-[18px] shrink-0 pl-[3px]">
      {graphTabs.map((tab, i) => {
        const active = tab === "Event Graph";
        return (
          <div
            key={tab}
            className={clsx(
              "flex w-[124px] items-center border-r border-[#222] pr-[5px] pl-[5px]",
              active ? "bg-[#3e3e3e]" : "bg-[#2c2c2c]",
            )}
          >
            <span className="flex w-[18px] items-center">
              {i === 0 ? (
                <svg className="size-[12px]" viewBox="0 0 12 12">
                  <path d="M0 1h5v4h-5zM0 6h5v5h-5z" fill="#cfdcec" />
                  <path d="M6 1h6v4h-6zM6 6h6v5h-6z" fill="#5f86ae" />
                </svg>
              ) : active ? (
                <GraphIcon className="h-[11px] w-[13px]" />
              ) : (
                <FnIcon />
              )}
            </span>
            <button className="flex-1 text-left whitespace-nowrap" type="button">
              {tab}
            </button>
            <button aria-label={`Close ${tab}`} className="text-[9px] text-[#111]" type="button">
              ×
            </button>
          </div>
        );
      })}
    </div>
  );
}

function Breadcrumb() {
  return (
    <div className="relative flex h-[34px] items-center bg-black/55 pl-[5px] text-[16px] text-[#8a8a8a]">
      <button aria-label="Favorite" type="button">
        <svg className="size-[17px]" viewBox="0 0 17 17">
          <path
            d="M8.500 1.500l2 4.800l5 0.400l-3.900 3.300l1.300 5l-4.400-2.800l-4.400 2.800l1.300-5l-3.900-3.300l5-0.400z"
            fill="none"
            stroke="#ddd"
            strokeWidth="1.300"
          />
        </svg>
      </button>
      <span className="ml-[5px] h-[28px] w-px bg-[#444]" />
      <button aria-label="Back" className="ml-[10px]" type="button">
        <svg className="h-[17px] w-[14px]" viewBox="0 0 14 17">
          <path d="M0 8.500l8-8v5h6v6h-6v5z" fill="#8a8a8a" />
        </svg>
      </button>
      <button aria-label="Forward" className="ml-[21px]" type="button">
        <svg className="h-[17px] w-[14px]" viewBox="0 0 14 17">
          <path d="M14 8.500l-8-8v5h-6v6h6v5z" fill="#8a8a8a" />
        </svg>
      </button>
      <span className="ml-[12px] h-[28px] w-px bg-[#555]" />
      <GraphIcon className="ml-[9px] h-[16px] w-[20px]" />
      <span className="ml-[11px]">PlayerCharacter</span>
      <svg className="mx-[7px] h-[12px] w-[7px]" viewBox="0 0 7 12">
        <path d="M1 1l5 5l-5 5" fill="none" stroke="#ddd" strokeWidth="1.800" />
      </svg>
      <span>Event Graph</span>
      <span className="flex-1" />
      <span className="pr-[5px] font-bold text-[#353535] [text-shadow:none]">Zoom -5</span>
    </div>
  );
}

function CompilerResults() {
  return (
    <section className="shrink-0 pt-[4px]">
      <div className="pl-[3px]">
        <PanelTab
          text="Compiler Results"
          icon={
            <svg className="h-[12px] w-[11px]" viewBox="0 0 11 12">
              <path d="M0 0h8v11h-8z" fill="#d8e2f4" />
              <path d="M2 3l3 2l-3 2" fill="none" stroke="#3c5f9c" />
              <circle cx="8" cy="9" r="2.200" fill="none" stroke="#7c98cc" />
            </svg>
          }
        />
      </div>
      <div className="flex flex-col bg-[#3e3e3e] px-[5px] pt-[5px]">
        <div className="h-[148px] bg-[#222]" />
        <div className="flex h-[31px] items-center justify-end pr-[5px] pb-[2px]">
          <button className="text-[10px] text-[#7d7d7d] [text-shadow:none]" type="button">
            Clear
          </button>
        </div>
      </div>
    </section>
  );
}

/* ---------- details ---------- */

type Prop = {
  name: string;
  kind: "array" | "number" | "check" | "vector" | "select" | "class";
  value?: string;
  on?: boolean;
  reset?: boolean;
  off?: boolean;
};

type Section = { title: string; props: Prop[]; more?: boolean };

const num = (name: string, value: string, reset = false): Prop => ({
  name,
  kind: "number",
  value,
  reset,
});
const check = (name: string, on = false): Prop => ({ name, kind: "check", on });
const choice = (name: string, value: string, off = false): Prop => ({
  name,
  kind: "select",
  value,
  off,
});

const sections: Section[] = [
  {
    title: "Default",
    props: [
      { name: "Object Types", kind: "array" },
      num("Interaction Distance", "1000.0"),
      num("Poke Distance", "5000.0"),
      num("Handle Distance", "300.0"),
      check("Physics Handle Active"),
      { name: "Handle Location", kind: "vector" },
      check("Lock Camera Control"),
    ],
  },
  {
    title: "Actor Tick",
    more: true,
    props: [
      check("Start with Tick Enabled", true),
      num("Tick Interval (secs)", "0.0"),
      check("Allow Tick Before Begin Play"),
    ],
  },
  {
    title: "Character",
    props: [num("Jump Max Hold Time", "0.0"), num("Jump Max Count", "1")],
  },
  {
    title: "Camera",
    props: [num("Crouched Eye Height", "32.0"), num("Base Eye Height", "180.0", true)],
  },
  {
    title: "Pawn",
    props: [
      check("Use Controller Rotation Pitch"),
      check("Use Controller Rotation Yaw", true),
      check("Use Controller Rotation Roll"),
      check("Can Affect Navigation Gener"),
      choice("Auto Possess Player", "Disabled"),
      choice("Auto Possess AI", "Placed in World"),
      { name: "AI Controller Class", kind: "class", value: "AIController" },
    ],
  },
  {
    title: "Replication",
    more: true,
    props: [
      check("Only Relevant to Owner"),
      check("Always Relevant"),
      check("Replicate Movement", true),
      check("Net Load on Client", true),
      check("Net Use Owner Relevancy"),
      check("Replay Rewindable"),
      check("Replicates", true),
      choice("Net Dormancy", "Awake"),
      num("Net Cull Distance Squared", "225000000.0"),
      num("Net Update Frequency", "100.0"),
      num("Min Net Update Frequency", "2.0"),
      num("Net Priority", "3.0"),
    ],
  },
  {
    title: "Rendering",
    props: [check("Actor Hidden In Game"), num("Editor Billboard Scale", "1.0")],
  },
  {
    title: "Collision",
    props: [
      check("Generate Overlap Events Du", true),
      choice("Update Overlaps Method Du", "Use Config Default"),
      choice("Default Update Overlaps Me", "Only Update Movable", true),
    ],
  },
];

function NumberField({
  id,
  axis,
  value,
  className,
}: {
  id: string;
  axis?: string;
  value: string;
  className: string;
}) {
  return (
    <span
      className={clsx(
        "flex h-[15px] items-center rounded-[2px] border border-[#999] bg-[#d8d8d8] px-[3px] text-[9px] text-[#222] [text-shadow:none]",
        className,
      )}
    >
      {axis && <span className="w-[11px]">{axis}</span>}
      <input
        aria-label={axis && `${id} ${axis}`}
        className="w-full min-w-0 bg-transparent text-[9px] leading-[12px] outline-none"
        defaultValue={value}
        id={id}
        type="text"
      />
      <svg className="size-[8px] shrink-0" viewBox="0 0 8 8">
        <path d="M3.500 0h4.500v4.500zM0 3.500v4.500h4.500z" fill="#111" />
      </svg>
    </span>
  );
}

function SelectField({
  id,
  value,
  off,
  className,
}: {
  id: string;
  value: string;
  off?: boolean;
  className: string;
}) {
  return (
    <span className={clsx("relative h-[17px]", className)}>
      <select
        className={clsx(
          "size-full appearance-none rounded-[1px] border border-[#8a8a8a] pl-[3px] text-[9px] leading-[12px] [text-shadow:none] disabled:opacity-100",
          off
            ? "bg-[#7c7c7c] text-[#333]"
            : "bg-linear-to-b from-[#e2e2e2] to-[#a9a9a9] text-black",
        )}
        disabled={off}
        id={id}
      >
        <option>{value}</option>
      </select>
      <Caret className="pointer-events-none absolute top-[6px] right-[5px] w-[7px] text-black" />
    </span>
  );
}

function PropValue({ id, prop }: { id: string; prop: Prop }) {
  const value = prop.value ?? "";
  switch (prop.kind) {
    case "array":
      return (
        <>
          <span className="w-[92px] pl-[3px]">1 Array elements</span>
          <button aria-label="Add element" className="w-[20px]" type="button">
            <PlusMark />
          </button>
          <button aria-label="Clear elements" type="button">
            <svg className="h-[10px] w-[9px]" viewBox="0 0 9 10">
              <path d="M0 1.500h9v1.200h-9zM3 0.300h3v1h-3zM1 3.300h7l-0.600 6.500h-5.800z" fill="#bbb" />
              <path d="M3 4.500v4M4.500 4.500v4M6 4.500v4" stroke="#555" strokeWidth="0.700" />
            </svg>
          </button>
        </>
      );
    case "check":
      return (
        <span className="relative ml-px flex size-[12px]">
          <input
            className="size-[12px] appearance-none rounded-[1px] bg-[#a9a9a9] checked:bg-[#e0e0e0]"
            defaultChecked={prop.on}
            id={id}
            type="checkbox"
          />
          {prop.on && (
            <svg className="pointer-events-none absolute inset-[2px] size-[8px]" viewBox="0 0 8 8">
              <path d="M0.500 4.200l2.500 2.600l4.500-6" fill="none" stroke="#444" strokeWidth="1.800" />
            </svg>
          )}
        </span>
      );
    case "vector":
      return (
        <span className="flex gap-[2px]">
          {["X", "Y", "Z"].map((axis) => (
            <NumberField key={axis} axis={axis} className="w-[73px]" id={`${id}-${axis}`} value="0.0" />
          ))}
        </span>
      );
    case "select":
      return (
        <SelectField
          className={
            prop.off ? "w-[107px]" : value.startsWith("Use") ? "w-[96px]" : "w-[86px]"
          }
          id={id}
          off={prop.off}
          value={value}
        />
      );
    case "class":
      return (
        <>
          <SelectField className="w-[65px]" id={id} value={value} />
          <button aria-label="Use selected class" className="ml-[8px]" type="button">
            <svg className="size-[11px]" viewBox="0 0 11 11">
              <path d="M0 5.500l6-5v3h4v4h-4v3.500z" fill="#eee" />
            </svg>
          </button>
          <button aria-label="Browse to class" className="ml-[9px]" type="button">
            <Magnifier className="size-[11px] text-[#ccc]" />
          </button>
          <button aria-label="Clear class" className="ml-[10px]" type="button">
            <svg className="size-[8px]" viewBox="0 0 8 8">
              <path d="M1 1l6 6M7 1l-6 6" stroke="#fff" strokeWidth="2.400" />
            </svg>
          </button>
        </>
      );
    default:
      return (
        <>
          <NumberField className="w-[87px]" id={id} value={value} />
          {prop.reset && (
            <button aria-label="Reset to default" className="ml-[6px]" type="button">
              <svg className="size-[8px]" viewBox="0 0 8 8">
                <path d="M1 2h5.500v4.500h-4M3 0l-2 2l2 2" fill="none" stroke="#d6d62a" strokeWidth="1.200" />
              </svg>
            </button>
          )}
        </>
      );
  }
}

const rowHeight: Record<Prop["kind"], string> = {
  array: "h-[22px]",
  number: "h-[20px]",
  check: "h-[20px]",
  vector: "h-[21px]",
  select: "h-[20px]",
  class: "h-[22px]",
};

function PropRow({ prop }: { prop: Prop }) {
  const id = prop.name.toLowerCase().replace(/ /g, "-");
  const expandable = prop.kind === "array" || prop.kind === "vector";
  return (
    <div
      className={clsx(
        "flex text-[9px]",
        prop.name.startsWith("Auto") ? "h-[21px]" : rowHeight[prop.kind],
      )}
    >
      <div className="flex w-[128px] shrink-0 items-center border-r border-[#333] pl-[3px]">
        <span className="flex w-[9px] shrink-0">{expandable && <ClosedMark />}</span>
        <label className="whitespace-nowrap" htmlFor={prop.kind === "vector" ? `${id}-X` : id}>
          {prop.name}
        </label>
      </div>
      <div className="flex flex-1 items-center pl-[3px]">
        <PropValue id={id} prop={prop} />
      </div>
    </div>
  );
}

function DetailsPanel() {
  return (
    <aside className="flex w-[383px] shrink-0 flex-col">
      <div className="pl-[3px]">
        <PanelTab
          text="Details"
          icon={
            <svg className="size-[13px]" viewBox="0 0 13 13">
              <circle cx="6" cy="6" r="5" fill="#35549b" stroke="#8ea9dd" strokeWidth="1.500" />
              <path d="M6 3v1.400M6 5.500v3.500" stroke="#fff" strokeWidth="1.500" />
              <path d="M9.500 9.500l3 3" stroke="#8ea9dd" strokeWidth="2" />
            </svg>
          }
        />
      </div>
      <div className="flex min-h-0 flex-1 flex-col bg-[#3e3e3e] pl-[2px]">
        <div className="flex h-[22px] shrink-0 items-center pr-[4px] pl-px">
          <SearchBox label="Search Details" />
          <button
            aria-label="Property matrix"
            className="ml-[6px] flex h-[18px] w-[21px] items-center justify-center rounded-[1px] bg-linear-to-b from-[#ddd] to-[#8a8a8a]"
            type="button"
          >
            <svg className="size-[12px]" viewBox="0 0 12 12">
              <path d="M0 1h12M0 4h12M0 7h12M0 10h12" stroke="#666" strokeWidth="2" strokeDasharray="3 1.500" />
            </svg>
          </button>
          <button aria-label="View options" className="ml-[4px] flex items-center gap-[2px]" type="button">
            <Eye />
            <Caret className="text-[#bbb]" />
          </button>
        </div>
        <div className="flex min-h-0 flex-1 overflow-hidden">
          <div className="min-w-0 flex-1">
            {sections.map((section) => (
              <div key={section.title}>
                <div className="flex h-[24px] items-center bg-[#303030] font-bold">
                  <div className="flex h-full w-[128px] items-center gap-[3px] border-r border-[#272727] pl-[2px]">
                    <OpenMark />
                    <span>{section.title}</span>
                  </div>
                </div>
                {section.props.map((prop) => (
                  <PropRow key={prop.name} prop={prop} />
                ))}
                {section.more ? (
                  <button
                    aria-label={`Show advanced ${section.title}`}
                    className="mt-px flex h-[11px] w-full items-center justify-center bg-[#484848]"
                    type="button"
                  >
                    <Caret />
                  </button>
                ) : (
                  <div className="h-[10px]">
                    <div className="h-full w-[128px] border-r border-[#333]" />
                  </div>
                )}
              </div>
            ))}
          </div>
          <div className="w-[12px] pt-[2px]">
            <div className="h-[828px] w-[9px] rounded-[1px] bg-white" />
          </div>
        </div>
      </div>
    </aside>
  );
}

export default function App() {
  return (
    <div className="flex h-screen min-h-[600px] flex-col overflow-hidden border-t border-b border-t-[#5c5c5c] border-b-[#a9a3a5] bg-[#222] font-['Roboto',sans-serif] text-[10px] leading-[14px] text-[#c8c8c8] [text-shadow:1px_1px_1px_#0009]">
      <TitleBar />
      <MenuBar />
      <div className="flex min-h-0 flex-1 pr-[6px] pb-[5px] pl-[5px]">
        <div className="flex w-[337px] shrink-0 flex-col">
          <ComponentsPanel />
          <BlueprintPanel />
        </div>
        <main className="mr-[4px] ml-[5px] flex min-w-0 flex-1 flex-col">
          <Toolbar />
          <div className="mt-[4px]">
            <GraphTabs />
          </div>
          <div className="relative min-h-0 flex-1 border border-[#3e3e3e]">
            <Graph />
            <Breadcrumb />
          </div>
          <CompilerResults />
        </main>
        <DetailsPanel />
      </div>
    </div>
  );
}
